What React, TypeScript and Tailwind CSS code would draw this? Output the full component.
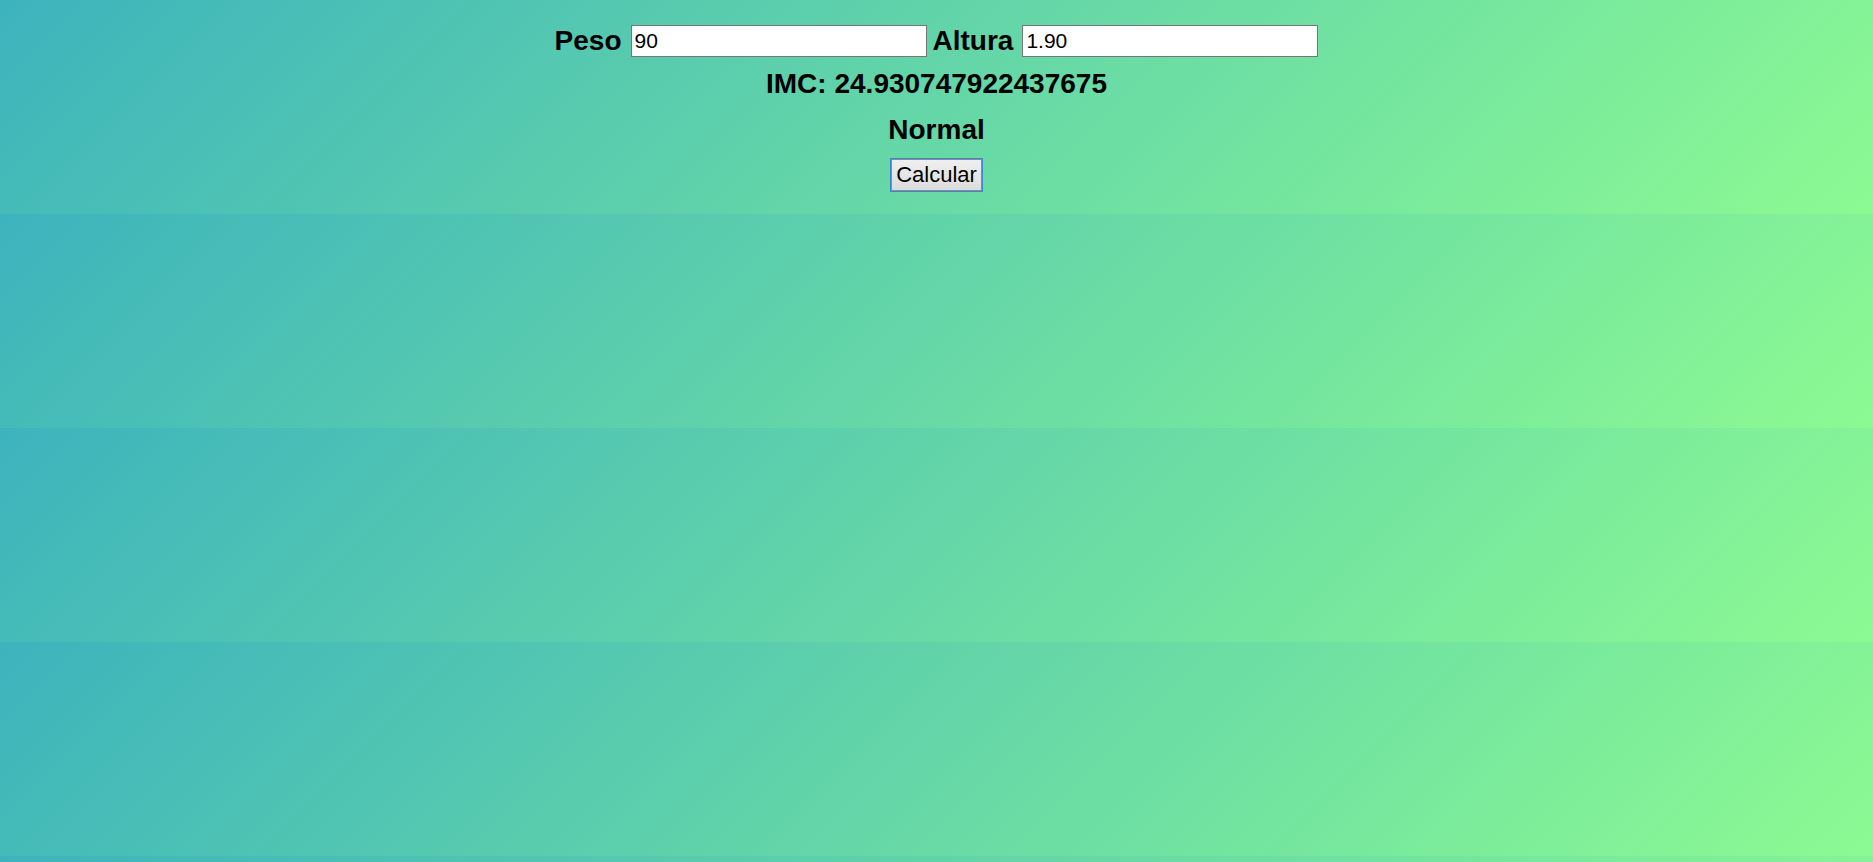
import { useState } from "react";

export default function App() {
  const [peso, setPeso] = useState("90");
  const [altura, setAltura] = useState("1.90");
  const [imc, setImc] = useState(24.930747922437675);

  const calcular = () => {
    const p = parseFloat(peso);
    const a = parseFloat(altura);
    if (!p || !a) return;
    setImc(p / (a * a));
  };

  const faixa =
    imc < 18.5 ? "Abaixo do peso" : imc < 25 ? "Normal" : imc < 30 ? "Sobrepeso" : "Obesidade";

  return (
    <div className="h-screen w-full bg-[linear-gradient(135deg,#3db3bd,#8cfa92)] bg-[length:100%_214px] bg-repeat font-['Liberation_Sans',Arial,sans-serif] text-black">
      <div className="flex h-[214px] flex-col items-center pt-[25px]">
        <div className="flex h-[32px] items-center">
          <label htmlFor="peso" className="mr-[9px] text-[28px] font-bold leading-8">
            Peso
          </label>
          <input
            id="peso"
            type="text"
            value={peso}
            onChange={(e) => setPeso(e.target.value)}
            className="h-[32px] w-[296px] border border-[#767676] bg-white px-[3px] text-[21px] leading-none text-black outline-none"
          />
          <label htmlFor="altura" className="ml-[6px] mr-[9px] text-[28px] font-bold leading-8">
            Altura
          </label>
          <input
            id="altura"
            type="text"
            value={altura}
            onChange={(e) => setAltura(e.target.value)}
            className="h-[32px] w-[296px] border border-[#767676] bg-white px-[3px] text-[21px] leading-none text-black outline-none"
          />
        </div>

        <h2 className="mt-[11px] text-[28px] font-bold leading-8">IMC: {imc}</h2>
        <h2 className="mt-[14px] text-[28px] font-bold leading-8">{faixa}</h2>

        <button
          type="button"
          onClick={calcular}
          className="mt-[12px] h-[34px] border border-[#3c87d1] bg-[linear-gradient(#f0f0f0,#dcdcdc)] px-[5px] text-[22px] leading-none text-black shadow-[inset_0_0_0_1px_#8c8c8c]"
        >
          Calcular
        </button>
      </div>
    </div>
  );
}
